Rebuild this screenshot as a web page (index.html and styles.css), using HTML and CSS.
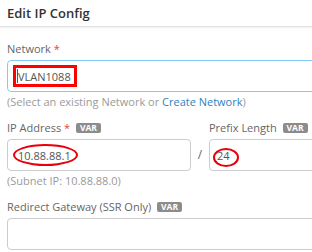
FILE: index.html
```html
<!DOCTYPE html>
<html lang="en">
<head>
    <meta charset="UTF-8">
    <meta name="viewport" content="width=device-width, initial-scale=1.0">
    <title>Edit IP Config</title>
    <link rel="stylesheet" href="styles.css">
</head>
<body>
    <div class="header">
        <h2>Edit IP Config</h2>
    </div>

    <div class="form">
        <div class="group">
            <label>Network <span class="req">*</span></label>
            <div class="field">
                <input type="text" class="focused" value="VLAN1088">
                <span class="caret"></span>
                <span class="mark box-network"></span>
            </div>
            <p class="help">(Select an existing Network or <a href="#">Create Network</a>)</p>
        </div>

        <div class="row">
            <div class="group">
                <label>IP Address <span class="req">*</span> <span class="var">VAR</span></label>
                <div class="field">
                    <input type="text" value="10.88.88.1">
                    <span class="mark oval-ip"></span>
                </div>
            </div>
            <div class="slash">/</div>
            <div class="group">
                <label>Prefix Length <span class="var">VAR</span></label>
                <div class="field">
                    <input type="text" class="short" value="24">
                    <span class="mark oval-prefix"></span>
                </div>
            </div>
        </div>
        <p class="help">(Subnet IP: 10.88.88.0)</p>

        <div class="group">
            <label>Redirect Gateway (SSR Only) <span class="var">VAR</span></label>
            <div class="field">
                <input type="text" value="">
            </div>
        </div>
    </div>
</body>
</html>
```

FILE: styles.css
```css
body {
    font-family: "Open Sans", "Liberation Sans", sans-serif;
    background-color: white;
    color: #333;
    margin: 0;
    padding: 0;
    overflow: hidden;
}
.header {
    height: 26px;
    padding: 0 7px;
    border-bottom: 1px solid #e3e3e3;
    box-shadow: 0 1px 1px rgba(0, 0, 0, 0.05);
}
.header h2 {
    margin: 0;
    font-size: 13px;
    font-weight: 600;
    line-height: 26px;
    color: #333;
}
.form {
    width: 340px;
    padding: 14px 7px 0 7px;
}
.group {
    margin-bottom: 9px;
}
label {
    display: block;
    font-size: 11px;
    line-height: 16px;
    color: #666;
    margin-bottom: 3px;
    white-space: nowrap;
}
.req {
    color: #e8423b;
}
.var {
    display: inline-block;
    background-color: #8c8c8c;
    color: white;
    font-size: 8.5px;
    font-weight: 700;
    line-height: 10px;
    padding: 0 4px;
    border-radius: 2px;
    margin-left: 3px;
    vertical-align: 1px;
}
.field {
    position: relative;
}
input[type="text"] {
    display: block;
    width: 100%;
    height: 32px;
    padding: 0 10px;
    font-family: inherit;
    font-size: 11px;
    color: #555;
    border: 1px solid #ccc;
    border-radius: 4px;
    box-sizing: border-box;
    outline: none;
}
input.focused {
    border-color: #7fcdf7;
}
input.short {
    padding-left: 7px;
}
.help {
    margin: 2px 0 10px 0;
    font-size: 11px;
    line-height: 16px;
    color: #9a9a9a;
    white-space: nowrap;
}
.help a {
    color: #2f7fc1;
    text-decoration: none;
}
.group + .help {
    margin-top: -7px;
}
.row {
    display: grid;
    grid-template-columns: 184px 18px 1fr;
    align-items: end;
}
.row .group {
    margin-bottom: 0;
}
.slash {
    height: 32px;
    line-height: 32px;
    text-align: center;
    font-size: 12px;
    color: #666;
}
.caret {
    position: absolute;
    left: 10px;
    top: 9px;
    width: 1px;
    height: 14px;
    background-color: #555;
}
.mark {
    position: absolute;
    box-sizing: border-box;
    border: 3px solid #f00;
}
.box-network {
    left: 6px;
    top: 5px;
    width: 64px;
    height: 22px;
}
.oval-ip {
    left: 6px;
    top: 5px;
    width: 65px;
    height: 22px;
    border-width: 2.5px;
    border-color: #e8000b;
    border-radius: 50%;
}
.oval-prefix {
    left: 4px;
    top: 9px;
    width: 26px;
    height: 19px;
    border-width: 2.5px;
    border-color: #e8000b;
    border-radius: 50%;
}
```
